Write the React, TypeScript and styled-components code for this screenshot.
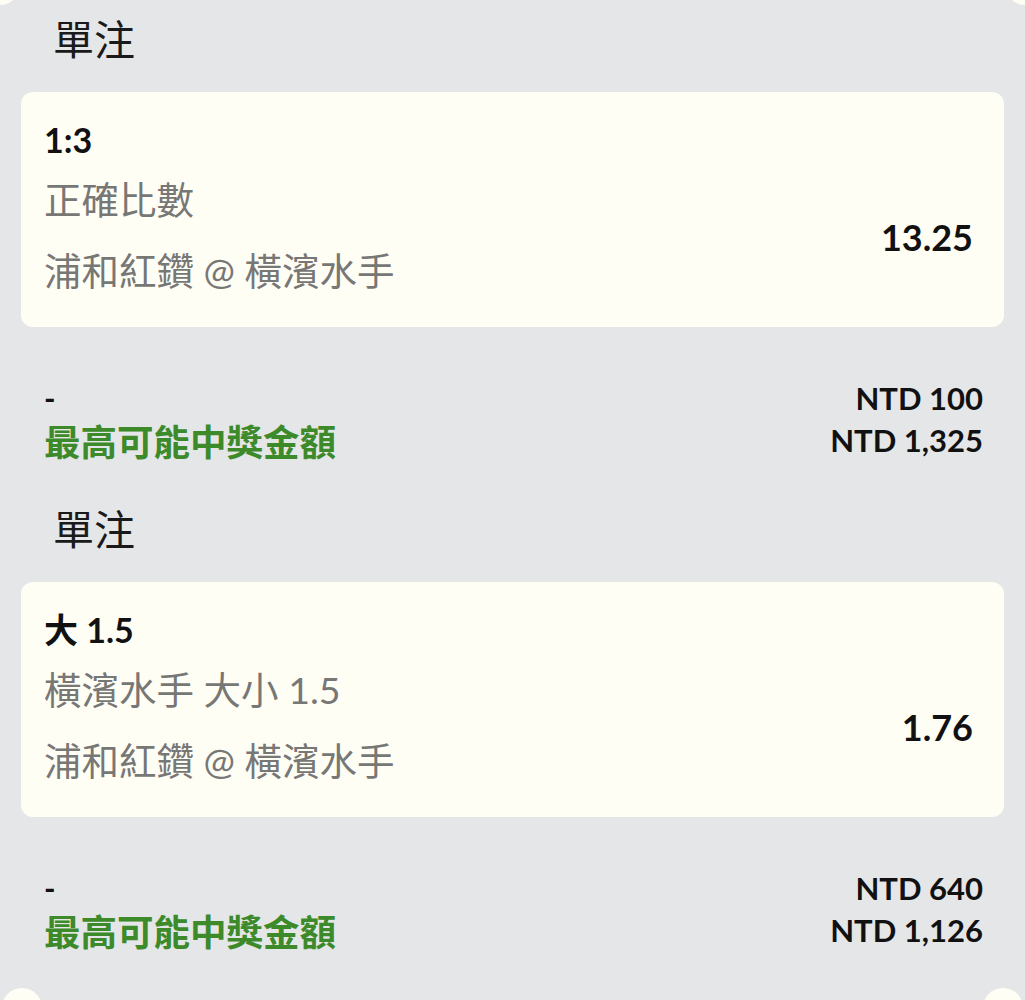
import React from "react";
import styled, { createGlobalStyle } from "styled-components";

const GlobalStyle = createGlobalStyle`
  html, body {
    margin: 0;
    padding: 0;
    background: #e5e6e8;
  }
  body {
    font-family: Lato, "Noto Sans CJK TC", "Noto Sans", sans-serif;
    color: #111;
    overflow: hidden;
  }
`;

const Page = styled.div`
  width: 1025px;
  min-height: 1000px;
  background: #e5e6e8;
  overflow: hidden;
  display: flex;
  flex-direction: column;
`;

const NotchRow = styled.div<{ $top?: boolean }>`
  display: flex;
  justify-content: space-between;
  height: ${(p) => (p.$top ? "0" : "auto")};
  padding: ${(p) => (p.$top ? "0" : "0 2px")};
  margin: ${(p) => (p.$top ? "0 -20px" : "37px 0 0")};
`;

const Notch = styled.div<{ $top?: boolean }>`
  width: 40px;
  height: 40px;
  border-radius: 50%;
  background: #fffef5;
  margin-top: ${(p) => (p.$top ? "-35px" : "0")};
`;

const List = styled.div`
  display: flex;
  flex-direction: column;
  gap: 41px;
  padding: 12px 21px 0 21px;
`;

const Section = styled.section`
  display: flex;
  flex-direction: column;
`;

const Heading = styled.h2`
  margin: 0 0 24px;
  padding-left: 32px;
  font-size: 41px;
  font-weight: 400;
  line-height: 56px;
  color: #1a1a1a;
`;

const Card = styled.div`
  background: #fffef5;
  border-radius: 12px;
  height: 235px;
  box-sizing: border-box;
  padding: 26px 31px 0 23px;
  display: flex;
  justify-content: space-between;
  align-items: center;
`;

const Info = styled.div`
  display: flex;
  flex-direction: column;
  align-self: flex-start;
`;

const Selection = styled.div`
  font-size: 34px;
  font-weight: 700;
  line-height: 44px;
  color: #111;
`;

const Detail = styled.div<{ $gap: number }>`
  margin-top: ${(p) => p.$gap}px;
  font-size: 37.5px;
  line-height: 50px;
  color: #777775;
`;

const Odds = styled.div`
  font-size: 36px;
  font-weight: 700;
  color: #111;
  margin-top: 28px;
`;

const Summary = styled.div`
  margin-top: 50px;
  padding: 0 21px 0 23px;
  display: grid;
  grid-template-columns: 1fr auto;
  grid-auto-rows: 42px;
  align-items: center;
`;

const Dash = styled.div`
  font-size: 31px;
  font-weight: 700;
  color: #111;
`;

const Label = styled.div`
  font-size: 36.5px;
  font-weight: 700;
  color: #3d8a2b;
`;

const Amount = styled.div`
  font-size: 31px;
  font-weight: 700;
  text-align: right;
  color: #111;
`;

type Bet = {
  selection: string;
  market: string;
  match: string;
  odds: string;
  stake: string;
  payout: string;
};

const bets: Bet[] = [
  {
    selection: "1:3",
    market: "正確比數",
    match: "浦和紅鑽 @ 橫濱水手",
    odds: "13.25",
    stake: "NTD 100",
    payout: "NTD 1,325",
  },
  {
    selection: "大 1.5",
    market: "橫濱水手 大小 1.5",
    match: "浦和紅鑽 @ 橫濱水手",
    odds: "1.76",
    stake: "NTD 640",
    payout: "NTD 1,126",
  },
];

export default function App() {
  return (
    <Page>
      <GlobalStyle />
      <NotchRow $top>
        <Notch $top />
        <Notch $top />
      </NotchRow>
      <List>
        {bets.map((b, i) => (
          <Section key={i}>
            <Heading>單注</Heading>
            <Card>
              <Info>
                <Selection>{b.selection}</Selection>
                <Detail $gap={13}>{b.market}</Detail>
                <Detail $gap={21}>{b.match}</Detail>
              </Info>
              <Odds>{b.odds}</Odds>
            </Card>
            <Summary>
              <Dash>-</Dash>
              <Amount>{b.stake}</Amount>
              <Label>最高可能中獎金額</Label>
              <Amount>{b.payout}</Amount>
            </Summary>
          </Section>
        ))}
      </List>
      <NotchRow>
        <Notch />
        <Notch />
      </NotchRow>
    </Page>
  );
}
